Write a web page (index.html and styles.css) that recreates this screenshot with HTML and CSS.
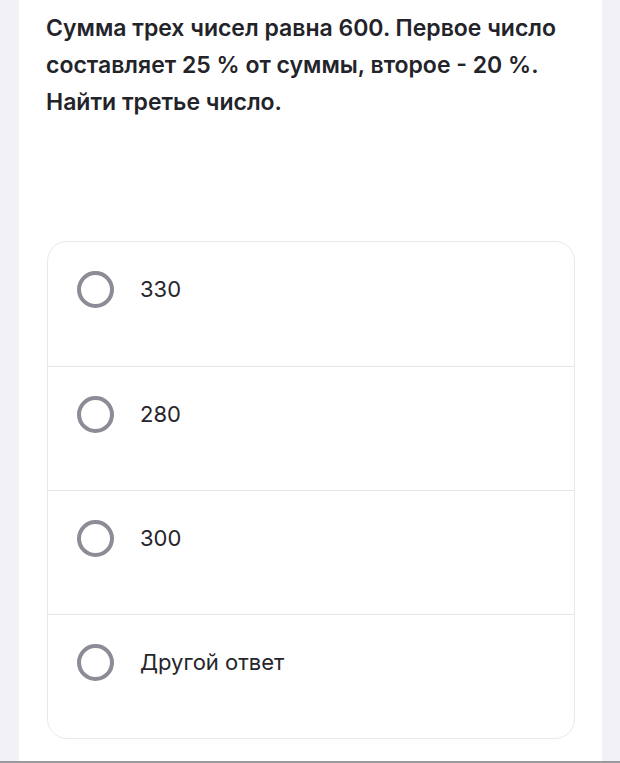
FILE: index.html
```html
<!DOCTYPE html>
<html lang="ru">
<head>
<meta charset="UTF-8">
<meta name="viewport" content="width=device-width, initial-scale=1.0">
<title>Тест</title>
<link rel="stylesheet" href="styles.css">
</head>
<body>

<div class="page">
    <h1 class="question">Сумма трех чисел равна 600. Первое число составляет 25 % от суммы, второе - 20 %. Найти третье число.</h1>

    <div class="answers">
        <label class="answer">
            <input type="radio" name="answer">
            <span class="radio"></span>
            <span class="answer-text">330</span>
        </label>
        <label class="answer">
            <input type="radio" name="answer">
            <span class="radio"></span>
            <span class="answer-text">280</span>
        </label>
        <label class="answer">
            <input type="radio" name="answer">
            <span class="radio"></span>
            <span class="answer-text">300</span>
        </label>
        <label class="answer">
            <input type="radio" name="answer">
            <span class="radio"></span>
            <span class="answer-text">Другой ответ</span>
        </label>
    </div>
</div>

</body>
</html>
```

FILE: styles.css
```css
html, body {
    margin: 0;
    height: 100%;
}
body {
    font-family: Inter, "Noto Sans", sans-serif;
    background: #f2f2f6;
    color: #23232a;
    box-sizing: border-box;
    border-bottom: 2px solid #9a9a9e;
}
.page {
    margin: 0 18px 0 19px;
    background: #ffffff;
    height: 100%;
    padding: 10px 20px 0 27px;
    box-sizing: border-box;
}
.question {
    margin: 0;
    font-size: 23px;
    font-weight: 600;
    line-height: 37px;
}
.answers {
    margin: 120px 7px 0 1px;
    border: 1px solid #e9e9ed;
    border-radius: 20px;
}
.answer {
    display: flex;
    align-items: flex-start;
    height: 124px;
    padding: 29px 29px 0;
    box-sizing: border-box;
    border-top: 1px solid #e6e6ea;
    cursor: pointer;
}
.answer:first-child {
    border-top: none;
}
.answer input {
    display: none;
}
.radio {
    width: 37px;
    height: 37px;
    border: 4px solid #8c8b96;
    border-radius: 50%;
    box-sizing: border-box;
    flex-shrink: 0;
}
.answer-text {
    margin-left: 26px;
    font-size: 22px;
    line-height: 37px;
    color: #25252b;
}
```
